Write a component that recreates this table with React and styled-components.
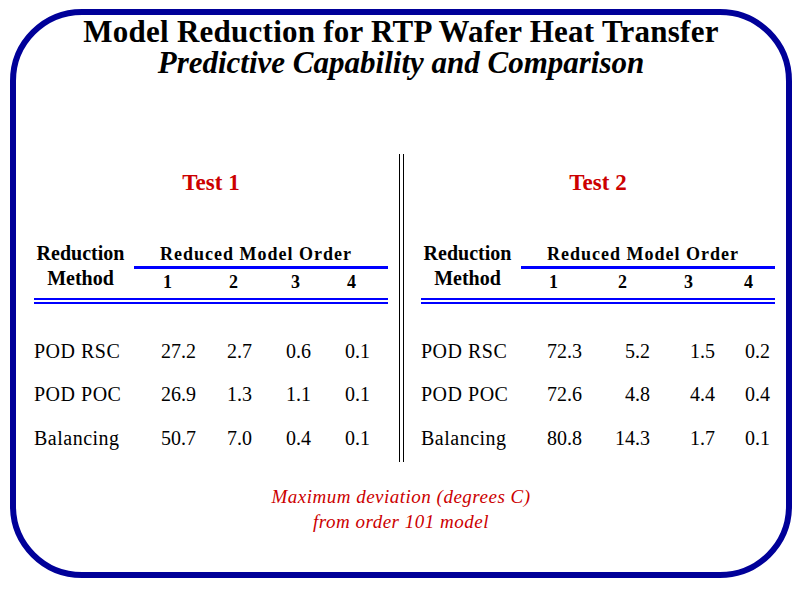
import React from "react";
import styled, { createGlobalStyle } from "styled-components";

const serif = `"Liberation Serif", "Times New Roman", Times, "DejaVu Serif", serif`;

const GlobalStyle = createGlobalStyle`
  html, body {
    margin: 0;
    padding: 0;
    background: #ffffff;
  }
  body {
    font-family: ${serif};
    color: #000000;
  }
`;

const Frame = styled.div`
  box-sizing: border-box;
  width: 782px;
  height: 569px;
  margin: 9px 0 0 10px;
  border: 6px solid #000099;
  border-radius: 72px;
  display: flex;
  flex-direction: column;
  align-items: stretch;
  font-family: ${serif};
`;

const Title = styled.h1`
  margin: 0;
  font-family: ${serif};
  font-size: 31px;
  line-height: 33px;
  font-weight: bold;
  letter-spacing: 0.25px;
  text-align: center;
`;

const Subtitle = styled.h2`
  margin: 0;
  font-family: ${serif};
  font-size: 31px;
  line-height: 29px;
  font-weight: bold;
  font-style: italic;
  text-align: center;
`;

const Tables = styled.div`
  display: flex;
  align-items: stretch;
  margin-top: 77px;
  padding-left: 18px;
`;

const Divider = styled.div`
  box-sizing: border-box;
  width: 5px;
  border-left: 1px solid #000;
  border-right: 1px solid #000;
  margin: 0 17px 0 11px;
`;

const Panel = styled.div`
  width: 354px;
  padding-top: 16px;
  padding-bottom: 2px;
`;

const TestLabel = styled.div`
  color: #cc0000;
  font-family: ${serif};
  font-size: 23px;
  line-height: 26px;
  font-weight: bold;
  text-align: center;
`;

const Grid = styled.div`
  display: grid;
  grid-template-columns: ${(p) => p.cols};
  font-family: ${serif};
`;

const HeadGrid = styled(Grid)`
  margin-top: 44px;
`;

const MethodHead = styled.div`
  width: 93px;
  font-size: 20px;
  font-weight: bold;
  text-align: center;
  line-height: ${(p) => p.lh}px;
`;

const OrderHead = styled.div`
  grid-column: 2 / 7;
  box-sizing: content-box;
  height: 24px;
  padding-top: 2px;
  padding-right: 10px;
  border-bottom: 3px solid #0000ff;
  font-size: 18px;
  font-weight: bold;
  letter-spacing: 1px;
  line-height: 24px;
  text-align: center;
`;

const OrderNum = styled.div`
  font-size: 18px;
  font-weight: bold;
  line-height: 22px;
  padding-top: 2px;
  text-align: right;
  padding-right: ${(p) => p.pad}px;
`;

const DoubleRule = styled.div`
  height: 2px;
  border-top: 2px solid #0000ff;
  border-bottom: 2px solid #0000ff;
  margin-top: 5px;
`;

const Rows = styled(Grid)`
  margin-top: 26px;
  font-size: 20px;
  font-weight: normal;
  line-height: 43.4px;
`;

const MethodCell = styled.div`
  letter-spacing: 0.5px;
  white-space: nowrap;
`;

const ValueCell = styled.div`
  text-align: right;
`;

const Note = styled.div`
  margin-top: 23px;
  color: #cc0000;
  font-family: ${serif};
  font-size: 19px;
  font-style: italic;
  letter-spacing: 0.5px;
  line-height: 24.3px;
  text-align: center;
`;

const tests = [
  {
    name: "Test 1",
    cols: "100px 62px 56px 59px 59px 18px",
    headPad: [24, 14, 11, 14],
    rows: [
      ["POD RSC", "27.2", "2.7", "0.6", "0.1"],
      ["POD POC", "26.9", "1.3", "1.1", "0.1"],
      ["Balancing", "50.7", "7.0", "0.4", "0.1"],
    ],
  },
  {
    name: "Test 2",
    cols: "100px 61px 68px 65px 55px 5px",
    headPad: [24, 23, 22, 17],
    rows: [
      ["POD RSC", "72.3", "5.2", "1.5", "0.2"],
      ["POD POC", "72.6", "4.8", "4.4", "0.4"],
      ["Balancing", "80.8", "14.3", "1.7", "0.1"],
    ],
  },
];

function TestTable({ test }) {
  return (
    <Panel>
      <TestLabel>{test.name}</TestLabel>
      <HeadGrid cols={test.cols}>
        <MethodHead lh={26}>Reduction</MethodHead>
        <OrderHead>Reduced Model Order</OrderHead>
        <MethodHead lh={18}>Method</MethodHead>
        {test.headPad.map((pad, i) => (
          <OrderNum key={i} pad={pad}>
            {i + 1}
          </OrderNum>
        ))}
      </HeadGrid>
      <DoubleRule />
      <Rows cols={test.cols}>
        {test.rows.map((r) => (
          <React.Fragment key={r[0]}>
            <MethodCell>{r[0]}</MethodCell>
            {r.slice(1).map((v, i) => (
              <ValueCell key={i}>{v}</ValueCell>
            ))}
            <div />
          </React.Fragment>
        ))}
      </Rows>
    </Panel>
  );
}

export default function App() {
  return (
    <>
      <GlobalStyle />
      <Frame>
        <Title>Model Reduction for RTP Wafer Heat Transfer</Title>
        <Subtitle>Predictive Capability and Comparison</Subtitle>
        <Tables>
          <TestTable test={tests[0]} />
          <Divider />
          <TestTable test={tests[1]} />
        </Tables>
        <Note>
          Maximum deviation (degrees C)
          <br />
          from order 101 model
        </Note>
      </Frame>
    </>
  );
}
